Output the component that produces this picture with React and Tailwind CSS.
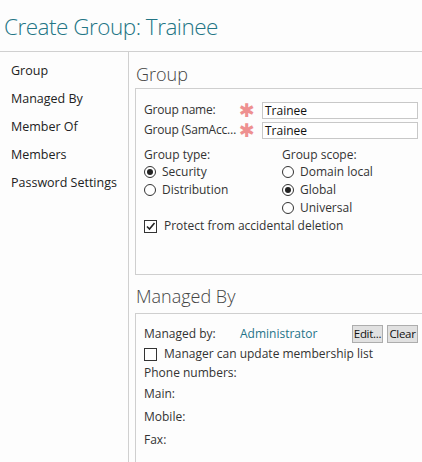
import React from "react";

const navItems = ["Group", "Managed By", "Member Of", "Members", "Password Settings"];

function Radio({ checked, label }) {
  return (
    <label className="flex items-center h-[18px]">
      <span className="w-[12px] h-[12px] rounded-full border border-[#333] bg-white flex items-center justify-center">
        {checked && <span className="w-[6px] h-[6px] rounded-full bg-[#222]" />}
      </span>
      <span className="ml-[6px]">{label}</span>
    </label>
  );
}

function Check({ checked, label }) {
  return (
    <label className="flex items-center h-[18px]">
      <span className="w-[13px] h-[13px] border border-[#333] bg-white flex items-center justify-center">
        {checked && (
          <svg width="11" height="11" viewBox="0 0 11 11">
            <path d="M2 5.5 L4.5 8 L9.5 2" fill="none" stroke="#222" strokeWidth="1.6" />
          </svg>
        )}
      </span>
      <span className="ml-[7px]">{label}</span>
    </label>
  );
}

function Field({ label, value }) {
  return (
    <div className="flex items-center h-[20px]">
      <span className="w-[95px] truncate tracking-[-0.2px]">{label}</span>
      <span className="w-[15px] text-[#ee9090] text-[19px] leading-none text-center font-['DejaVu_Sans',sans-serif]">
        ✱
      </span>
      <div className="ml-[8px] w-[156px] h-[17px] border border-[#c8c8c8] bg-white pl-[2px] leading-[15px] text-[#111]">
        {value}
      </div>
    </div>
  );
}

export default function App() {
  return (
    <div className="w-[422px] h-[462px] overflow-hidden bg-[#fdfdfd] text-[12px] text-[#333] font-['Open_Sans',sans-serif]">
      <div className="h-[52px] border-b border-[#d0d0d0] pl-[4px] pt-[12px]">
        <h1 className="text-[22.5px] font-light leading-[30px] text-[#237585] tracking-[-0.5px]">
          Create Group: Trainee
        </h1>
      </div>
      <div className="flex">
        <nav className="w-[129px] shrink-0 h-[410px] border-r border-[#d0d0d0] pt-[5px] pl-[11px] text-[12.5px] text-[#222]">
          {navItems.map((item) => (
            <div key={item} className="h-[28px] leading-[28px]">
              {item}
            </div>
          ))}
        </nav>
        <main className="pl-[6px] shrink-0">
          <h2 className="h-[36px] pt-[10px] pl-[1px] text-[18px] font-light leading-[24px] text-[#444]">Group</h2>
          <section className="w-[300px] h-[187px] border border-[#cfcfcf] pt-[11px] pl-[8px]">
            <Field label="Group name:" value="Trainee" />
            <Field label="Group (SamAccountName):" value="Trainee" />
            <div className="flex mt-[6px]">
              <div className="w-[138px]">
                <div className="h-[17px] leading-[17px]">Group type:</div>
                <Radio checked label="Security" />
                <Radio label="Distribution" />
              </div>
              <div>
                <div className="h-[17px] leading-[17px]">Group scope:</div>
                <Radio label="Domain local" />
                <Radio checked label="Global" />
                <Radio label="Universal" />
              </div>
            </div>
            <Check checked label="Protect from accidental deletion" />
          </section>
          <h2 className="h-[38px] pt-[9px] pl-[1px] text-[18px] font-light leading-[24px] text-[#444]">Managed By</h2>
          <section className="w-[300px] h-[160px] border border-[#cfcfcf] pt-[9px] pl-[8px]">
            <div className="flex items-center h-[22px]">
              <span className="w-[96px]">Managed by:</span>
              <span className="w-[112px] text-[#1f7389]">Administrator</span>
              <button className="w-[31px] h-[18px] bg-[#e1e1e1] border border-[#adadad] leading-[16px] text-[11.5px] tracking-[-0.3px] text-[#111] overflow-hidden whitespace-nowrap">
                Edit...
              </button>
              <button className="ml-[4px] w-[31px] h-[18px] bg-[#e1e1e1] border border-[#adadad] leading-[16px] text-[11.5px] tracking-[-0.3px] text-[#111] overflow-hidden whitespace-nowrap">
                Clear
              </button>
            </div>
            <Check label="Manager can update membership list" />
            <div className="h-[20px] leading-[20px]">Phone numbers:</div>
            <div className="h-[22px] leading-[22px]">Main:</div>
            <div className="h-[23px] leading-[23px]">Mobile:</div>
            <div className="h-[23px] leading-[23px]">Fax:</div>
          </section>
        </main>
      </div>
    </div>
  );
}
